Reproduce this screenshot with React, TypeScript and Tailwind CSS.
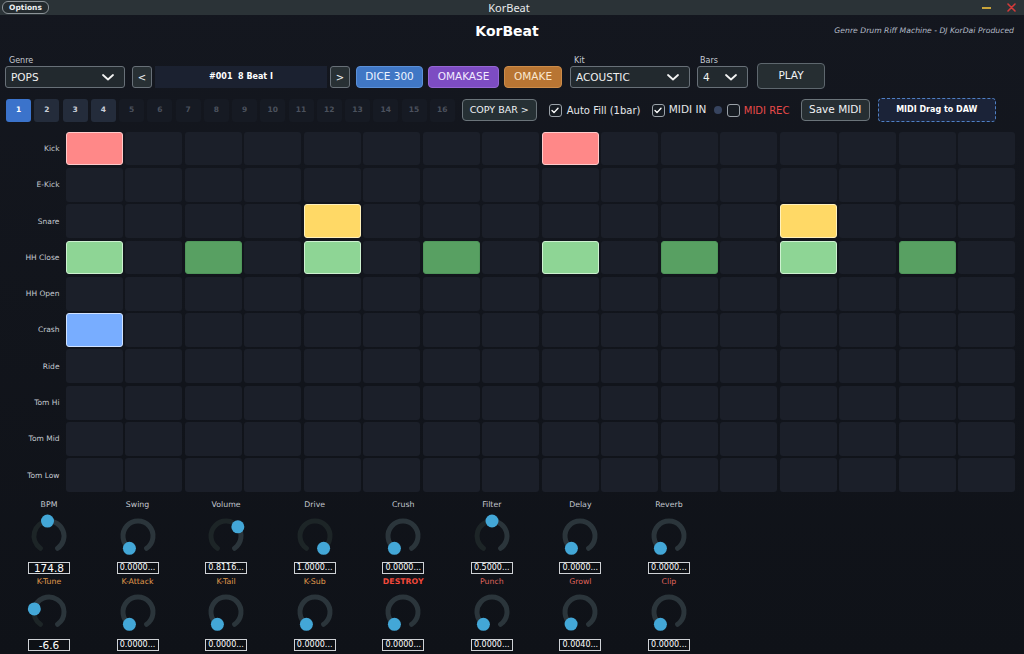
import React from "react";

const rows = ["Kick", "E-Kick", "Snare", "HH Close", "HH Open", "Crash", "Ride", "Tom Hi", "Tom Mid", "Tom Low"];

const active: Record<number, Record<number, string>> = {
  0: { 0: "kick", 8: "kick" },
  2: { 4: "snare", 12: "snare" },
  3: { 0: "hhA", 4: "hhA", 8: "hhA", 12: "hhA", 2: "hh", 6: "hh", 10: "hh", 14: "hh" },
  5: { 0: "crash" },
};

const cellCls: Record<string, string> = {
  off: "bg-[#1b1f29]",
  kick: "bg-[#ff8888] border border-[#ffcaca]",
  snare: "bg-[#ffd966] border border-[#fff0bb]",
  hhA: "bg-[#8ed595] border border-[#cdf1d0]",
  hh: "bg-[#58a062] border border-[#4f965a]",
  crash: "bg-[#78adff] border border-[#d0e2ff]",
};

type K = { l: string; v: number; t: string; big?: boolean; c: string };

const knobs1: K[] = [
  { l: "BPM", v: 0.48, t: "174.8", big: true, c: "text-[#c3c8d0]" },
  { l: "Swing", v: 0, t: "0.0000...", c: "text-[#c3c8d0]" },
  { l: "Volume", v: 0.68, t: "0.8116...", c: "text-[#c3c8d0]" },
  { l: "Drive", v: 1, t: "1.0000...", c: "text-[#c3c8d0]" },
  { l: "Crush", v: 0, t: "0.0000...", c: "text-[#c3c8d0]" },
  { l: "Filter", v: 0.5, t: "0.5000...", c: "text-[#c3c8d0]" },
  { l: "Delay", v: 0, t: "0.0000...", c: "text-[#c3c8d0]" },
  { l: "Reverb", v: 0, t: "0.0000...", c: "text-[#c3c8d0]" },
];

const knobs2: K[] = [
  { l: "K-Tune", v: 0.23, t: "-6.6", big: true, c: "text-[#e09a4c]" },
  { l: "K-Attack", v: 0, t: "0.0000...", c: "text-[#e09a4c]" },
  { l: "K-Tail", v: 0, t: "0.0000...", c: "text-[#e09a4c]" },
  { l: "K-Sub", v: 0, t: "0.0000...", c: "text-[#e09a4c]" },
  { l: "DESTROY", v: 0, t: "0.0000...", c: "text-[#f2493b] font-bold" },
  { l: "Punch", v: 0, t: "0.0000...", c: "text-[#df625a]" },
  { l: "Growl", v: 0.005, t: "0.0040...", c: "text-[#df625a]" },
  { l: "Clip", v: 0, t: "0.0000...", c: "text-[#df625a]" },
];

function Chevron() {
  return (
    <svg width="12" height="7" viewBox="0 0 12 7">
      <polyline points="1,1 6,5.5 11,1" fill="none" stroke="#f2f2f2" strokeWidth="1.8" strokeLinecap="round" strokeLinejoin="round" />
    </svg>
  );
}

function Knob({ v }: { v: number }) {
  const cx = 22, cy = 22, r = 15;
  const a0 = -145, a1 = 145;
  const av = a0 + (a1 - a0) * v;
  const pt = (a: number) => {
    const rad = (a * Math.PI) / 180;
    return [cx + r * Math.sin(rad), cy - r * Math.cos(rad)];
  };
  const arc = (from: number, to: number) => {
    const [x1, y1] = pt(from);
    const [x2, y2] = pt(to);
    const large = to - from > 180 ? 1 : 0;
    return `M ${x1} ${y1} A ${r} ${r} 0 ${large} 1 ${x2} ${y2}`;
  };
  const [dx, dy] = pt(av);
  return (
    <svg width="44" height="44" viewBox="0 0 44 44">
      {v < 0.999 && <path d={arc(av, a1)} stroke="#2b353b" strokeWidth="5" fill="none" strokeLinecap="round" />}
      {v > 0.02 && <path d={arc(a0, av)} stroke="#1d2527" strokeWidth="5" fill="none" strokeLinecap="round" />}
      <circle cx={dx} cy={dy} r="6.5" fill="#43a7d7" />
    </svg>
  );
}

function Check({ on }: { on: boolean }) {
  return (
    <div className="w-[13px] h-[13px] rounded-[3px] border border-[#9aa1a8] bg-[#161b22] flex items-center justify-center">
      {on && (
        <svg width="8" height="7" viewBox="0 0 8 7">
          <polyline points="1,3.6 3,5.6 7,1.2" fill="none" stroke="#ffffff" strokeWidth="1.4" strokeLinecap="round" strokeLinejoin="round" />
        </svg>
      )}
    </div>
  );
}

function Dropdown({ w, text }: { w: string; text: string }) {
  return (
    <div className={`${w} h-[22px] rounded-[3px] border border-[#687078] bg-[#22292e] flex items-center justify-between pl-[5px] pr-[10px]`}>
      <span className="text-[10.5px] text-[#f0f0f0] leading-none">{text}</span>
      <Chevron />
    </div>
  );
}

function KnobCol({ k, first }: { k: K; first: boolean }) {
  return (
    <div className="w-[88.57px] flex flex-col items-center">
      <div className={`h-[10px] leading-[10px] text-[7.8px] ${k.c} ${first ? "mt-0" : "mt-[3px]"}`}>{k.l}</div>
      <div className={first ? "mt-[4px]" : "mt-[3px]"}>
        <Knob v={k.v} />
      </div>
      <div
        className={`${first ? "mt-[4px]" : "mt-[5px]"} w-[42px] h-[12px] border border-[#cfd2d6] bg-[#0d1015] flex items-center justify-center text-white leading-none ${
          k.big ? "text-[10.5px]" : "text-[8px]"
        }`}
      >
        {k.t}
      </div>
    </div>
  );
}

export default function App() {
  return (
    <div className="w-[1024px] h-[654px] overflow-hidden bg-gradient-to-b from-[#14171f] to-[#0f1218] font-['DejaVu_Sans',sans-serif] text-white select-none">
      {/* Title bar */}
      <div className="h-[15px] bg-[#2b3337] flex items-center">
        <div className="flex-1 flex items-center pl-[2px]">
          <div className="w-[47px] h-[13px] rounded-[6px] border border-[#8c9398] bg-[#242b2f] flex items-center justify-center text-[7.5px] font-semibold text-[#eef0f2] leading-none">
            Options
          </div>
        </div>
        <div className="text-[11px] text-[#e8eaec] leading-none font-['Noto_Sans',sans-serif]">KorBeat</div>
        <div className="flex-1 flex items-center justify-end pr-[8px] gap-[16px]">
          <div className="w-[9px] h-[2px] bg-[#c9a43a]" />
          <svg width="9" height="9" viewBox="0 0 9 9">
            <path d="M1 1 L8 8 M8 1 L1 8" stroke="#d43a3a" strokeWidth="1.6" strokeLinecap="round" />
          </svg>
        </div>
      </div>

      {/* Header */}
      <div className="h-[32px] flex items-center">
        <div className="flex-1" />
        <div className="text-[14px] font-bold text-white leading-none">KorBeat</div>
        <div className="flex-1 flex justify-end pr-[10px]">
          <span className="text-[7.7px] italic text-[#b4bcc8] leading-none">Genre Drum Riff Machine - DJ KorDai Produced</span>
        </div>
      </div>

      {/* Row 1 */}
      <div className="h-[43px] flex items-end pb-[2px] pl-[5px]">
        <div className="flex flex-col">
          <div className="h-[11px] leading-[14px] text-[8px] text-[#c5cad2] pl-[4px] mb-[1px]">Genre</div>
          <Dropdown w="w-[120px]" text="POPS" />
        </div>
        <div className="ml-[7px] w-[20px] h-[22px] rounded-[3px] border border-[#687078] bg-[#283034] flex items-center justify-center text-[10px] text-[#eef0f2]">
          &lt;
        </div>
        <div className="ml-[3px] w-[172px] h-[22px] bg-[#1b2130] flex items-center justify-center text-[8px] font-bold whitespace-pre text-white">
          #001  8 Beat I
        </div>
        <div className="ml-[3px] w-[20px] h-[22px] rounded-[3px] border border-[#687078] bg-[#283034] flex items-center justify-center text-[10px] text-[#eef0f2]">
          &gt;
        </div>
        <div className="ml-[6px] w-[67px] h-[22px] rounded-[4px] border border-[#5b90d8] bg-[#4077c5] flex items-center justify-center text-[10.5px] text-[#eef4ff]">
          DICE 300
        </div>
        <div className="ml-[5px] w-[71px] h-[22px] rounded-[4px] border border-[#9566d4] bg-[#7d4cc2] flex items-center justify-center text-[10.5px] text-[#f2eaff]">
          OMAKASE
        </div>
        <div className="ml-[5px] w-[58px] h-[22px] rounded-[4px] border border-[#cc8c4a] bg-[#b87533] flex items-center justify-center text-[10.5px] text-[#fbe8d0]">
          OMAKE
        </div>
        <div className="ml-[8px] flex flex-col">
          <div className="h-[11px] leading-[14px] text-[8px] text-[#c5cad2] pl-[4px] mb-[1px]">Kit</div>
          <Dropdown w="w-[120px]" text="ACOUSTIC" />
        </div>
        <div className="ml-[7px] flex flex-col">
          <div className="h-[11px] leading-[14px] text-[8px] text-[#c5cad2] pl-[3px] mb-[1px]">Bars</div>
          <Dropdown w="w-[51px]" text="4" />
        </div>
        <div className="ml-[9px] mb-[-1px] w-[68px] h-[26px] rounded-[4px] border border-[#5e676e] bg-[#262e32] flex items-center justify-center text-[10.5px] text-[#f2f4f6]">
          PLAY
        </div>
      </div>

      {/* Row 2 */}
      <div className="mt-[8px] h-[24px] flex items-center pl-[6px]">
        <div className="flex gap-[3.25px]">
          {Array.from({ length: 16 }, (_, i) => {
            const n = i + 1;
            const cls =
              n === 1
                ? "bg-[#3b73cb] text-white"
                : n <= 4
                ? "bg-[#242c3b] text-[#c9ced8]"
                : "bg-[#161a23] text-[#4b515d]";
            return (
              <div key={n} className={`w-[25px] h-[23px] rounded-[3px] flex items-center justify-center text-[7.5px] font-bold ${cls}`}>
                {n}
              </div>
            );
          })}
        </div>
        <div className="ml-[7px] w-[75px] h-[22px] rounded-[4px] border border-[#6b747a] bg-[#263034] flex items-center justify-center text-[9.5px] text-[#f0f2f4]">
          COPY BAR &gt;
        </div>
        <div className="ml-[12px]">
          <Check on={true} />
        </div>
        <span className="ml-[5px] w-[80px] text-[10px] text-[#e4e7ea] whitespace-nowrap">Auto Fill (1bar)</span>
        <div className="ml-[5px]">
          <Check on={true} />
        </div>
        <span className="ml-[4px] w-[42px] text-[10.5px] text-[#e4e7ea] whitespace-nowrap">MIDI IN</span>
        <div className="ml-[3px] w-[8px] h-[8px] rounded-full bg-[#37445f]" />
        <div className="ml-[5px]">
          <Check on={false} />
        </div>
        <span className="ml-[4px] w-[50px] text-[10px] text-[#e84a4a] whitespace-nowrap">MIDI REC</span>
        <div className="ml-[7px] w-[69px] h-[22px] rounded-[4px] border border-[#6b747a] bg-[#262e32] flex items-center justify-center text-[10.5px] text-[#f0f2f4]">
          Save MIDI
        </div>
        <div className="ml-[8px] w-[118px] h-[24px] rounded-[4px] border border-dashed border-[#4f80c4] bg-[#1b2338] flex items-center justify-center text-[8px] font-bold text-white">
          MIDI Drag to DAW
        </div>
      </div>

      {/* Grid */}
      <div className="mt-[9.7px] flex flex-col gap-[2.5px] pr-[9px]">
        {rows.map((name, ri) => (
          <div key={name} className="flex h-[33.8px]">
            <div className="w-[66px] pr-[6.5px] flex items-center justify-end text-[7.5px] text-[#c4c9d1] whitespace-nowrap">{name}</div>
            <div className="flex-1 grid grid-cols-16 gap-[2.5px]">
              {Array.from({ length: 16 }, (_, ci) => {
                const kind = active[ri]?.[ci] ?? "off";
                return <div key={ci} className={`rounded-[3px] ${cellCls[kind]}`} />;
              })}
            </div>
          </div>
        ))}
      </div>

      {/* Knobs */}
      <div className="mt-[8px] pl-[4.7px]">
        <div className="flex">
          {knobs1.map((k) => (
            <KnobCol key={k.l} k={k} first={true} />
          ))}
        </div>
        <div className="flex">
          {knobs2.map((k) => (
            <KnobCol key={k.l} k={k} first={false} />
          ))}
        </div>
      </div>
    </div>
  );
}
